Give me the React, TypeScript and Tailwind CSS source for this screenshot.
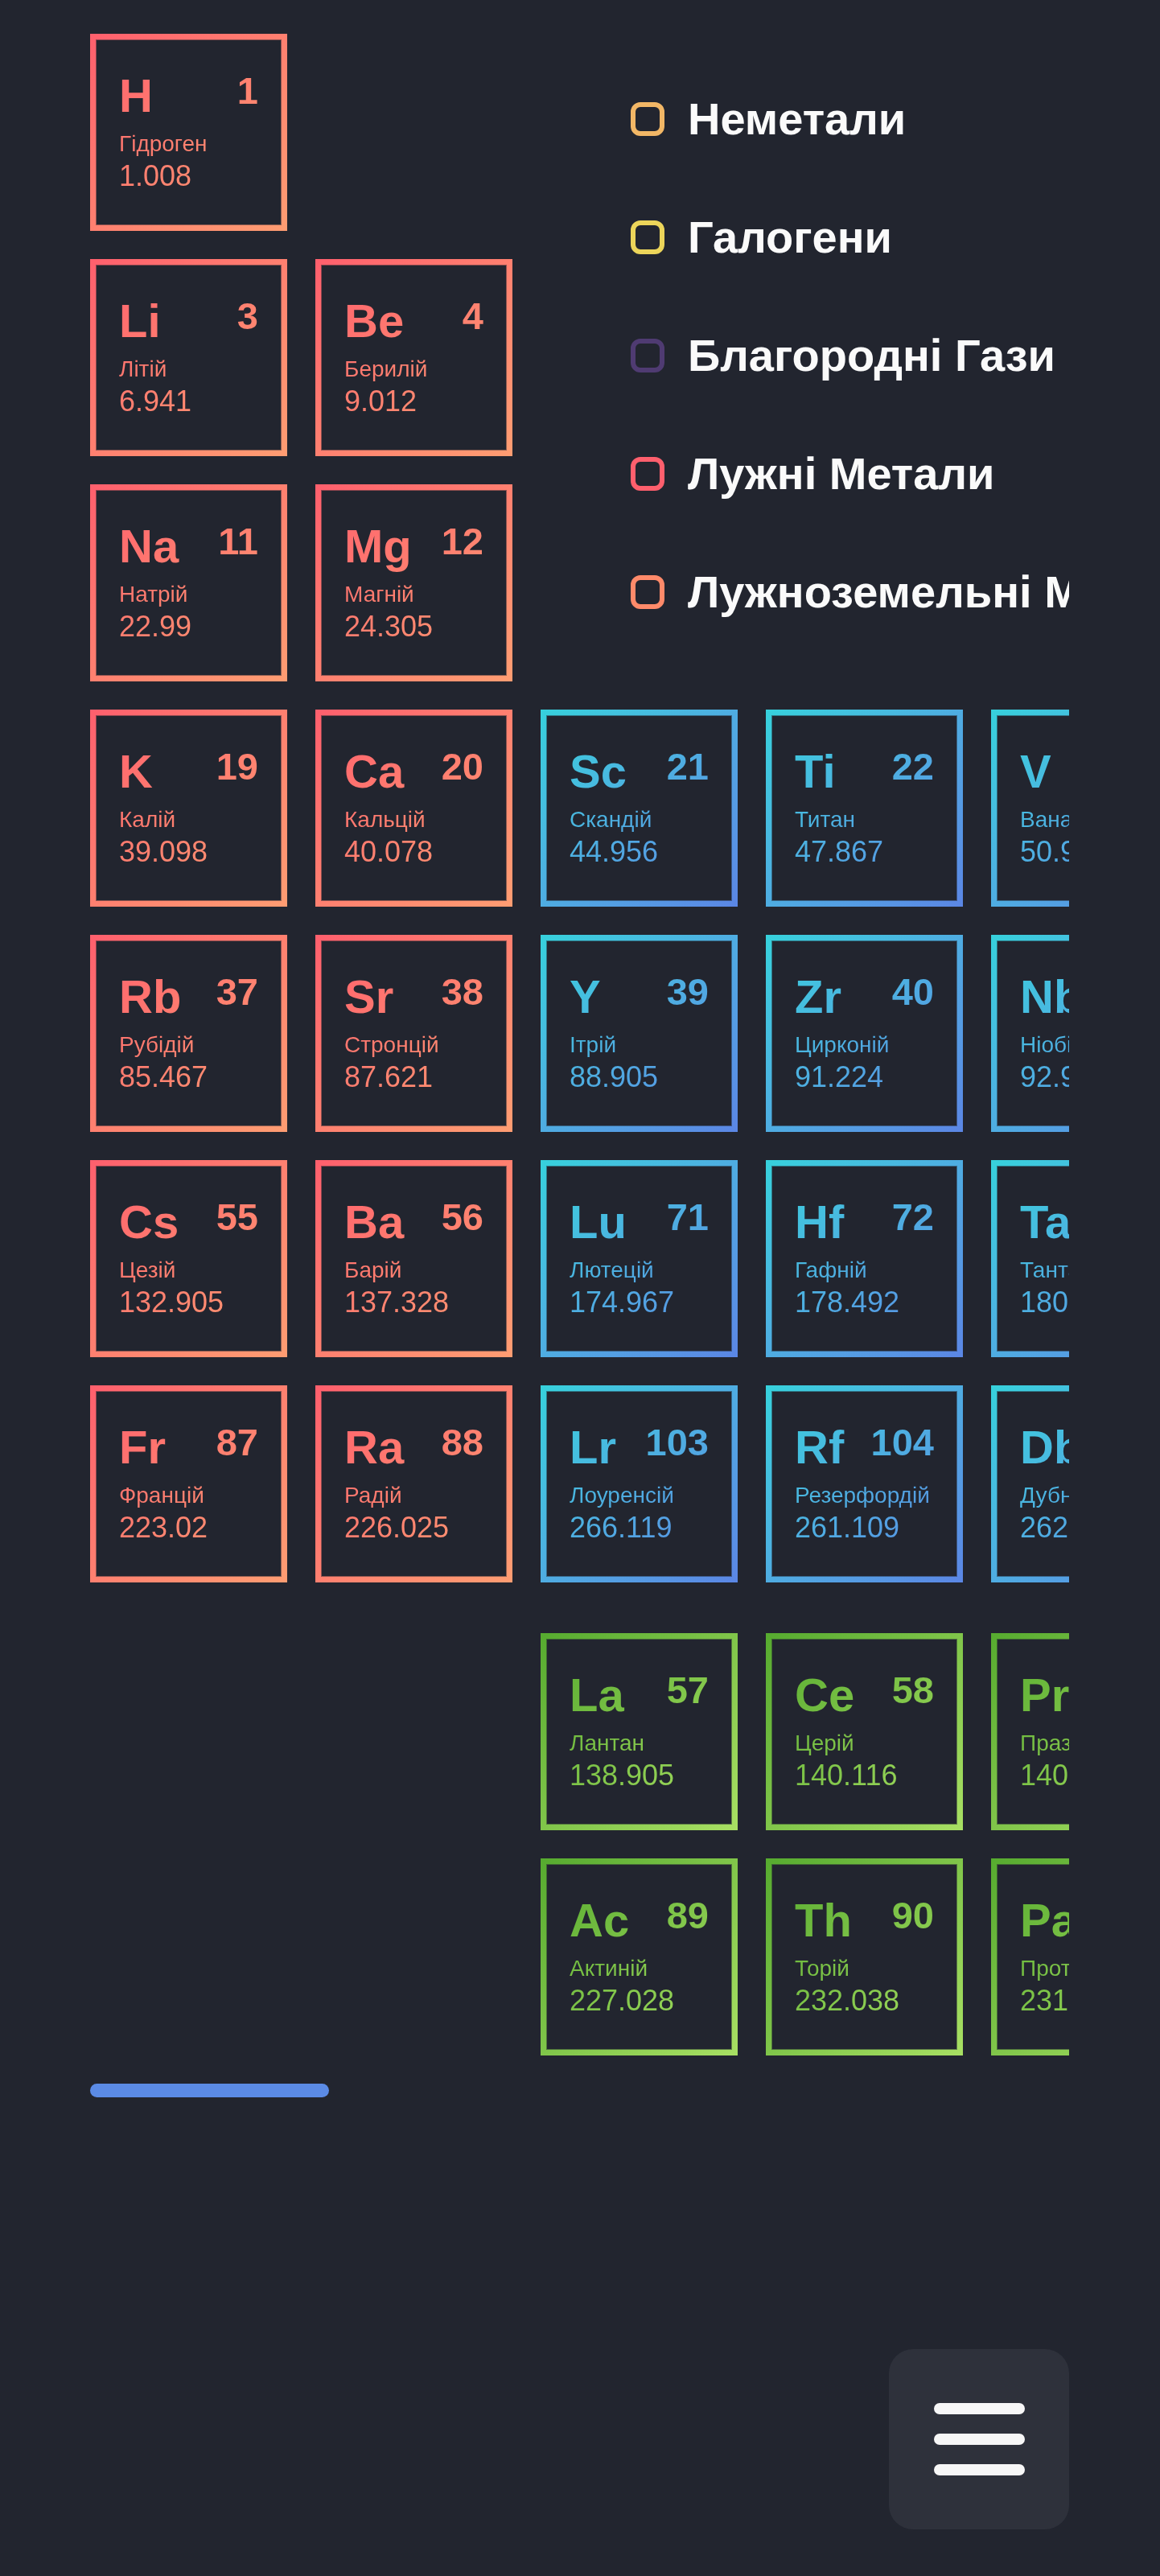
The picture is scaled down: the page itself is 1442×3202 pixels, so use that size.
import React from "react";

type Cat = "alkali" | "nonmetal" | "halogen" | "noble" | "metalloid" | "post" | "transition" | "inner";

const elements: string[] = [
  "H|Гідроген|1.008", "He|Гелій|4.003", "Li|Літій|6.941", "Be|Берилій|9.012", "B|Бор|10.811",
  "C|Вуглець|12.011", "N|Азот|14.007", "O|Оксиген|15.999", "F|Флуор|18.998", "Ne|Неон|20.180",
  "Na|Натрій|22.99", "Mg|Магній|24.305", "Al|Алюміній|26.982", "Si|Силіцій|28.086", "P|Фосфор|30.974",
  "S|Сульфур|32.065", "Cl|Хлор|35.453", "Ar|Аргон|39.948", "K|Калій|39.098", "Ca|Кальцій|40.078",
  "Sc|Скандій|44.956", "Ti|Титан|47.867", "V|Ванадій|50.942", "Cr|Хром|51.996", "Mn|Манган|54.938",
  "Fe|Ферум|55.845", "Co|Кобальт|58.933", "Ni|Нікол|58.693", "Cu|Купрум|63.546", "Zn|Цинк|65.38",
  "Ga|Галій|69.723", "Ge|Германій|72.63", "As|Арсен|74.922", "Se|Селен|78.971", "Br|Бром|79.904",
  "Kr|Криптон|83.798", "Rb|Рубідій|85.467", "Sr|Стронцій|87.621", "Y|Ітрій|88.905", "Zr|Цирконій|91.224",
  "Nb|Ніобій|92.906", "Mo|Молібден|95.95", "Tc|Технецій|98", "Ru|Рутеній|101.07", "Rh|Родій|102.906",
  "Pd|Паладій|106.42", "Ag|Аргентум|107.868", "Cd|Кадмій|112.414", "In|Індій|114.818", "Sn|Станум|118.71",
  "Sb|Стибій|121.76", "Te|Телур|127.6", "I|Йод|126.904", "Xe|Ксенон|131.293", "Cs|Цезій|132.905",
  "Ba|Барій|137.328", "La|Лантан|138.905", "Ce|Церій|140.116", "Pr|Празеодим|140.908", "Nd|Неодим|144.242",
  "Pm|Прометій|145", "Sm|Самарій|150.36", "Eu|Європій|151.964", "Gd|Гадоліній|157.25", "Tb|Тербій|158.925",
  "Dy|Диспрозій|162.5", "Ho|Гольмій|164.93", "Er|Ербій|167.259", "Tm|Тулій|168.934", "Yb|Ітербій|173.045",
  "Lu|Лютецій|174.967", "Hf|Гафній|178.492", "Ta|Тантал|180.948", "W|Вольфрам|183.84", "Re|Реній|186.207",
  "Os|Осмій|190.23", "Ir|Іридій|192.217", "Pt|Платина|195.084", "Au|Аурум|196.967", "Hg|Меркурій|200.592",
  "Tl|Талій|204.383", "Pb|Плюмбум|207.2", "Bi|Бісмут|208.98", "Po|Полоній|209", "At|Астат|210",
  "Rn|Радон|222", "Fr|Францій|223.02", "Ra|Радій|226.025", "Ac|Актиній|227.028", "Th|Торій|232.038",
  "Pa|Протактиній|231.036", "U|Уран|238.029", "Np|Нептуній|237", "Pu|Плутоній|244", "Am|Америцій|243",
  "Cm|Кюрій|247", "Bk|Берклій|247", "Cf|Каліфорній|251", "Es|Ейнштейній|252", "Fm|Фермій|257",
  "Md|Менделєвій|258", "No|Нобелій|259", "Lr|Лоуренсій|266.119", "Rf|Резерфордій|261.109", "Db|Дубній|262.114",
  "Sg|Сиборгій|266", "Bh|Борій|264", "Hs|Гасій|269", "Mt|Мейтнерій|268", "Ds|Дармштадтій|281",
  "Rg|Рентгеній|272", "Cn|Коперницій|285", "Nh|Ніхоній|286", "Fl|Флеровій|289", "Mc|Московій|290",
  "Lv|Ліверморій|293", "Ts|Теннессин|294", "Og|Оганесон|294",
];

const gradients: Record<Cat, string> = {
  alkali: "from-[#ff5f6d] to-[#ff9d72]",
  nonmetal: "from-[#f2a65a] to-[#f6c87a]",
  halogen: "from-[#e6c440] to-[#f5e27a]",
  noble: "from-[#41295a] to-[#6a4c93]",
  metalloid: "from-[#11998e] to-[#38ef7d]",
  post: "from-[#8e9eab] to-[#c5d3dc]",
  transition: "from-[#36d1dc] to-[#5b86e5]",
  inner: "from-[#56ab2f] to-[#a8e063]",
};

const groups: Partial<Record<Cat, number[]>> = {
  alkali: [1, 3, 4, 11, 12, 19, 20, 37, 38, 55, 56, 87, 88],
  nonmetal: [6, 7, 8, 15, 16, 34],
  halogen: [9, 17, 35, 53, 85, 117],
  noble: [2, 10, 18, 36, 54, 86, 118],
  metalloid: [5, 14, 32, 33, 51, 52],
  post: [13, 31, 49, 50, 81, 82, 83, 84, 113, 114, 115, 116],
};

const categoryOf = (z: number): Cat => {
  for (const key of Object.keys(groups) as Cat[]) {
    if (groups[key]!.includes(z)) return key;
  }
  if ((z >= 57 && z <= 70) || (z >= 89 && z <= 102)) return "inner";
  return "transition";
};

// row / column in the table; rows 8 and 9 go to the lower block
const placeOf = (z: number): [number, number] => {
  if (z === 1) return [1, 1];
  if (z === 2) return [1, 18];
  if (z <= 10) return [2, z <= 4 ? z - 2 : z + 8];
  if (z <= 18) return [3, z <= 12 ? z - 10 : z];
  if (z <= 36) return [4, z - 18];
  if (z <= 54) return [5, z - 36];
  if (z <= 56) return [6, z - 54];
  if (z <= 70) return [8, z - 54];
  if (z <= 86) return [6, z - 68];
  if (z <= 88) return [7, z - 86];
  if (z <= 102) return [9, z - 86];
  return [7, z - 100];
};

const legend = [
  { label: "Неметали", color: "border-[#f2b766]" },
  { label: "Галогени", color: "border-[#ecd55a]" },
  { label: "Благородні Гази", color: "border-[#4f3b72]" },
  { label: "Лужні Метали", color: "border-[#ff5f6d]" },
  { label: "Лужноземельні Метали", color: "border-[#ff8a6a]" },
  { label: "Перехідні Метали", color: "border-[#48a9e0]" },
  { label: "Постперехідні Метали", color: "border-[#a9b8c3]" },
  { label: "Металоїди", color: "border-[#24c486]" },
  { label: "Лантаноїди", color: "border-[#7fc649]" },
  { label: "Актиноїди", color: "border-[#7fc649]" },
];

const Tile: React.FC<{ z: number; row: number; col: number }> = ({ z, row, col }) => {
  const [symbol, name, mass] = elements[z - 1].split("|");
  const grad = gradients[categoryOf(z)];
  return (
    <div
      className={`w-[245px] h-[245px] p-[7px] bg-linear-to-br ${grad}`}
      style={{ gridRow: row, gridColumn: col }}
    >
      <div className="w-full h-full bg-[#22252f] bg-clip-padding border border-[#22252f]/50">
        <div className={`h-full pl-[28px] pr-[28px] pt-[40px] bg-linear-to-br ${grad} bg-clip-text text-transparent`}>
          <div className="flex items-start justify-between">
            <span className="text-[58px] font-bold leading-none">{symbol}</span>
            <span className="text-[47px] font-bold leading-none -mt-[1px]">{z}</span>
          </div>
          <div className="mt-[17px] text-[28px] leading-none whitespace-nowrap">{name}</div>
          <div className="mt-[8px] text-[36px] leading-none whitespace-nowrap">{mass}</div>
        </div>
      </div>
    </div>
  );
};

const App: React.FC = () => {
  const all = elements.map((_, i) => {
    const z = i + 1;
    const [row, col] = placeOf(z);
    return { z, row, col };
  });
  const main = all.filter((e) => e.row <= 7);
  const lower = all.filter((e) => e.row > 7);

  return (
    <div className="min-h-[3202px] bg-[#22252f] font-[family-name:'Liberation_Sans',Arial,sans-serif] pt-[42px]">
      <div className="ml-[112px] w-[1217px] overflow-hidden">
        <div className="grid w-max grid-cols-[repeat(18,245px)] grid-rows-[repeat(7,245px)] gap-[35px]">
          {main.map((e) => (
            <Tile key={e.z} z={e.z} row={e.row} col={e.col} />
          ))}
          <div className="col-start-3 col-span-10 row-start-1 row-span-3 pl-[112px] pt-[65px]">
            <div className="grid grid-flow-col grid-rows-[repeat(5,82px)] gap-y-[65px] gap-x-[120px] justify-start">
              {legend.map((item) => (
                <div key={item.label} className="flex items-center gap-[29px]">
                  <span className={`w-[42px] h-[42px] shrink-0 rounded-[12px] border-[6px] ${item.color}`} />
                  <span className="text-[56px] font-bold leading-none text-[#fafafa] whitespace-nowrap">
                    {item.label}
                  </span>
                </div>
              ))}
            </div>
          </div>
        </div>
        <div className="mt-[63px] grid w-max grid-cols-[repeat(18,245px)] grid-rows-[repeat(2,245px)] gap-[35px]">
          {lower.map((e) => (
            <Tile key={e.z} z={e.z} row={e.row - 7} col={e.col} />
          ))}
        </div>
      </div>

      <div className="ml-[112px] mt-[35px] w-[297px] h-[17px] rounded-full bg-[#5b8be6]" />

      <div className="mt-[313px] ml-[112px] w-[1217px] flex justify-end">
        <button className="w-[224px] h-[224px] rounded-[30px] bg-[#2e313b] flex flex-col items-center justify-center gap-[24px]">
          <span className="block w-[113px] h-[14px] rounded-full bg-[#f7f7f7]" />
          <span className="block w-[113px] h-[14px] rounded-full bg-[#f7f7f7]" />
          <span className="block w-[113px] h-[14px] rounded-full bg-[#f7f7f7]" />
        </button>
      </div>
    </div>
  );
};

export default App;
